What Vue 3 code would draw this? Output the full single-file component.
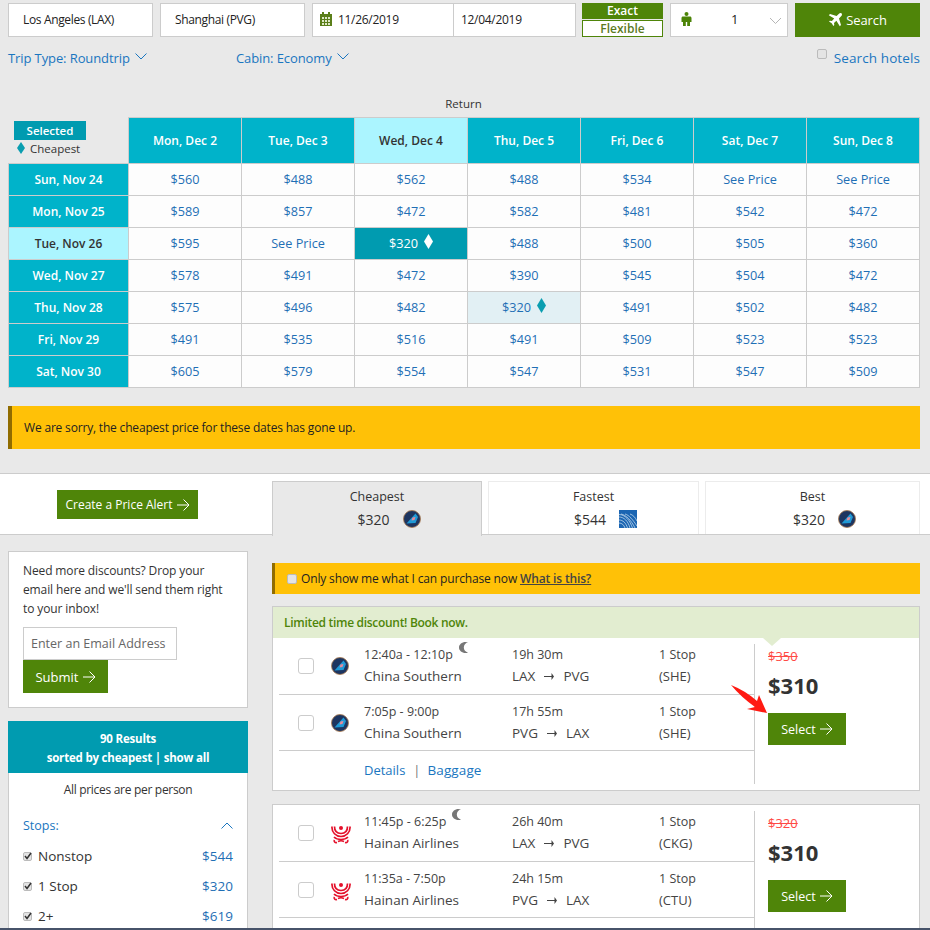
<script setup>
const heads = [
  { t: 'Mon, Dec 2' }, { t: 'Tue, Dec 3' }, { t: 'Wed, Dec 4', on: true }, { t: 'Thu, Dec 5' },
  { t: 'Fri, Dec 6' }, { t: 'Sat, Dec 7' }, { t: 'Sun, Dec 8' }
]
const rows = [
  { d: 'Sun, Nov 24', p: ['$560','$488','$562','$488','$534','See Price','See Price'] },
  { d: 'Mon, Nov 25', p: ['$589','$857','$472','$582','$481','$542','$472'] },
  { d: 'Tue, Nov 26', on: true, p: ['$595','See Price','$320','$488','$500','$505','$360'] },
  { d: 'Wed, Nov 27', p: ['$578','$491','$472','$390','$545','$504','$472'] },
  { d: 'Thu, Nov 28', p: ['$575','$496','$482','$320','$491','$502','$482'] },
  { d: 'Fri, Nov 29', p: ['$491','$535','$516','$491','$509','$523','$523'] },
  { d: 'Sat, Nov 30', p: ['$605','$579','$554','$547','$531','$547','$509'] }
]
const tabs = [
  { t: 'Cheapest', p: '$320', logo: 'cs', on: true },
  { t: 'Fastest', p: '$544', logo: 'ua' },
  { t: 'Best', p: '$320', logo: 'cs' }
]
const stops = [['Nonstop','$544'],['1 Stop','$320'],['2+','$619']]
const cards = [
  { discount: true, old: '$350', price: '$310', logo: 'cs', footer: true, legs: [
    { time: '12:40a - 12:10p', moon: true, air: 'China Southern', dur: '19h 30m', from: 'LAX', to: 'PVG', stop: '1 Stop', via: '(SHE)' },
    { time: '7:05p - 9:00p', air: 'China Southern', dur: '17h 55m', from: 'PVG', to: 'LAX', stop: '1 Stop', via: '(SHE)' }
  ]},
  { old: '$320', price: '$310', logo: 'hu', legs: [
    { time: '11:45p - 6:25p', moon: true, air: 'Hainan Airlines', dur: '26h 40m', from: 'LAX', to: 'PVG', stop: '1 Stop', via: '(CKG)' },
    { time: '11:35a - 7:50p', air: 'Hainan Airlines', dur: '24h 15m', from: 'PVG', to: 'LAX', stop: '1 Stop', via: '(CTU)' }
  ]}
]
</script>

<template>
  <div class="page">
    <div class="search">
      <div class="field f1">Los Angeles (LAX)</div>
      <div class="field f1">Shanghai (PVG)</div>
      <div class="dates">
        <div class="date d1">
          <svg width="14" height="14" viewBox="0 0 14 14" class="cal"><path fill="#5b7f1a" d="M1 2h2V0h2v2h4V0h2v2h2v12H1z"/><path fill="#dfe8c8" d="M3 5h2v2H3zM6 5h2v2H6zM9 5h2v2H9zM3 8h2v2H3zM6 8h2v2H6zM9 8h2v2H9zM3 11h2v2H3zM6 11h2v2H6zM9 11h2v2H9z"/></svg>
          <span>11/26/2019</span>
        </div>
        <div class="date d2">12/04/2019</div>
      </div>
      <div class="flex-toggle">
        <div class="exact">Exact</div>
        <div class="flexible">Flexible</div>
      </div>
      <div class="pax">
        <svg class="person" width="11" height="14" viewBox="0 0 11 14"><circle cx="5.5" cy="2" r="2" fill="#4c8408"/><path fill="#4c8408" d="M2 4.500h7c.9 0 1.500.6 1.500 1.500v4H9v4H6.200v-4H4.800v4H2v-4H.5V6c0-.9.6-1.500 1.500-1.500z"/></svg>
        <span class="pax-n">1</span>
        <svg class="chev-g" width="13" height="8" viewBox="0 0 13 8"><path d="M1 1l5.500 5.500L12 1" fill="none" stroke="#b5b5b5" stroke-width="1"/></svg>
      </div>
      <div class="search-btn">
        <svg width="14" height="14" viewBox="0 0 14 14"><path fill="#fff" d="M13.600.4c-.7-.7-2-.4-2.900.5L8.600 3 2 1 .8 2.200 6.200 5.600 3.900 8 1.900 7.700 1 8.600l2.700 1.700L5.400 13l.9-.9-.3-2 2.400-2.300 3.400 5.400 1.200-1.200-2-6.600 2.100-2.100c.9-.9 1.200-2.200.5-2.900z"/></svg>
        <span>Search</span>
      </div>
    </div>

    <div class="opts">
      <div class="opt trip">Trip Type: Roundtrip
        <svg width="12" height="7" viewBox="0 0 12 7"><path d="M.5.500L6 6 11.500.500" fill="none" stroke="#1a76c0"/></svg>
      </div>
      <div class="opt cabin">Cabin: Economy
        <svg width="12" height="7" viewBox="0 0 12 7"><path d="M.5.500L6 6 11.500.500" fill="none" stroke="#1a76c0"/></svg>
      </div>
      <div class="hotels"><span class="cb small"></span><span class="opt hotel-t">Search hotels</span></div>
    </div>

    <div class="return-label">Return</div>

    <div class="grid">
      <div class="legend">
        <div class="sel-tag">Selected</div>
        <div class="cheap-tag">
          <svg width="8" height="12" viewBox="0 0 8 12"><path fill="#0a9eb0" d="M4 0l4 6-4 6-4-6z"/></svg>
          <span>Cheapest</span>
        </div>
      </div>
      <div v-for="h in heads" :key="h.t" class="gh" :class="{ hon: h.on }">{{ h.t }}</div>
      <template v-for="(r, ri) in rows" :key="r.d">
        <div class="rh" :class="{ hon: r.on }">{{ r.d }}</div>
        <div v-for="(p, ci) in r.p" :key="ci" class="gc"
             :class="{ sel: ri === 2 && ci === 2, low: ri === 4 && ci === 3 }">
          <span>{{ p }}</span>
          <svg v-if="(ri === 2 && ci === 2) || (ri === 4 && ci === 3)" class="dia" width="9" height="15" viewBox="0 0 9 15">
            <path :fill="ri === 2 ? '#fff' : '#0a9eb0'" d="M4.500 0L9 7.500 4.500 15 0 7.500z"/>
          </svg>
        </div>
      </template>
    </div>

    <div class="alert">We are sorry, the cheapest price for these dates has gone up.</div>

    <div class="band">
      <div class="band-left">
        <div class="btn alert-btn">Create a Price Alert
          <svg width="13" height="12" viewBox="0 0 13 12"><path d="M0 6h12M6.500.500L12 6l-5.500 5.500" fill="none" stroke="#fff"/></svg>
        </div>
      </div>
      <div class="tabs">
        <div v-for="t in tabs" :key="t.t" class="tab" :class="{ active: t.on }">
          <div class="tab-t">{{ t.t }}</div>
          <div class="tab-p">
            <span>{{ t.p }}</span>
            <svg v-if="t.logo === 'cs'" width="18" height="18" viewBox="0 0 18 18">
              <circle cx="9" cy="9" r="8.500" fill="#1d3560" stroke="#a9794d" stroke-width=".8"/>
              <path fill="#1f9ad6" d="M12.500 3.500L15 7l-2.500 6-9 .5z"/>
              <path fill="#e88a9a" d="M9.500 7.500l3-.5-1 3-3 .5z"/>
            </svg>
            <svg v-else width="18" height="18" viewBox="0 0 18 18">
              <rect width="18" height="18" fill="#1b65b2"/>
              <g fill="none" stroke="#d6e6f4" stroke-width=".7">
                <path d="M0 7c5 0 9 4 11 11M0 10c4 0 7 3 8.500 8M0 13c3 0 5 2 6 5M0 4.500c6 0 11 6 13.500 13.500M2 4c5 1 10 6 14 14M6 4c4 1 8 6 12 12M11 4c3 1 5 3 7 7"/>
              </g>
            </svg>
          </div>
        </div>
      </div>
    </div>

    <div class="main">
      <aside class="side">
        <div class="promo">
          <p>Need more discounts? Drop your email here and we'll send them right to your inbox!</p>
          <div class="email">Enter an Email Address</div>
          <div class="btn submit">Submit
            <svg width="13" height="12" viewBox="0 0 13 12"><path d="M0 6h12M6.500.500L12 6l-5.500 5.500" fill="none" stroke="#fff"/></svg>
          </div>
        </div>
        <div class="res-head">
          <div>90 Results</div>
          <div>sorted by cheapest | show all</div>
        </div>
        <div class="filters">
          <div class="per">All prices are per person</div>
          <div class="stops-h">
            <span>Stops:</span>
            <svg width="12" height="7" viewBox="0 0 12 7"><path d="M.5 6.500L6 1l5.500 5.500" fill="none" stroke="#1a76c0"/></svg>
          </div>
          <div v-for="s in stops" :key="s[0]" class="stop-row">
            <span class="cb checked">
              <svg width="8" height="8" viewBox="0 0 8 8"><path d="M1 4l2 2.500L7 1" fill="none" stroke="#333" stroke-width="1.500"/></svg>
            </span>
            <span class="stop-name">{{ s[0] }}</span>
            <span class="stop-price">{{ s[1] }}</span>
          </div>
        </div>
      </aside>

      <section class="results">
        <div class="purchase">
          <span class="cb small"></span>
          <span>Only show me what I can purchase now <u>What is this?</u></span>
        </div>

        <article v-for="(c, ci) in cards" :key="ci" class="card">
          <div v-if="c.discount" class="disc">Limited time discount! Book now.</div>
          <div class="card-body">
            <div class="legs">
              <div v-for="(l, li) in c.legs" :key="li" class="leg">
                <span class="box"></span>
                <span class="logo">
                  <svg v-if="c.logo === 'cs'" width="18" height="18" viewBox="0 0 18 18">
                    <circle cx="9" cy="9" r="8.500" fill="#1d3560" stroke="#a9794d" stroke-width=".8"/>
                    <path fill="#1f9ad6" d="M12.500 3.500L15 7l-2.500 6-9 .5z"/>
                    <path fill="#e88a9a" d="M9.500 7.500l3-.5-1 3-3 .5z"/>
                  </svg>
                  <svg v-else width="20" height="20" viewBox="0 0 20 20">
                    <g fill="none" stroke="#e4102a" stroke-width="1.700">
                      <path d="M1 2.500c-.5 6 4 10 9 10s9.500-4 9-10"/>
                      <path d="M3.500 2.500C3.500 7 6 9.500 10 9.500s6.500-2.500 6.500-7"/>
                      <path d="M3 13c1.500 1.500 4 2.500 7 2.500s5.500-1 7-2.500"/>
                      <path d="M6 18.500c-2 .5-3.500-1-2.500-2.500M14 18.500c2 .5 3.500-1 2.500-2.500M7 17.500c2-1 4-1 6 0"/>
                    </g>
                    <circle cx="10" cy="4" r="2" fill="#e4102a"/>
                  </svg>
                </span>
                <div class="c-time">
                  <div class="l1">{{ l.time }}
                    <svg v-if="l.moon" class="moon" width="9" height="11" viewBox="0 0 9 11"><path fill="#777" d="M6.500 0C3 0 0 2.400 0 5.500S3 11 6.500 11c1 0 1.800-.2 2.500-.6C6.500 10 4.800 8 4.800 5.500S6.500 1 9 .6C8.300.2 7.500 0 6.500 0z"/></svg>
                  </div>
                  <div class="l2">{{ l.air }}</div>
                </div>
                <div class="c-dur">
                  <div class="l1">{{ l.dur }}</div>
                  <div class="l2">{{ l.from }}<svg class="arr" width="10" height="7" viewBox="0 0 10 7"><path fill="#444" d="M0 3h7.500V0L10 3.500 7.500 7V4H0z"/></svg>{{ l.to }}</div>
                </div>
                <div class="c-stop">
                  <div class="l1">{{ l.stop }}</div>
                  <div class="l2">{{ l.via }}</div>
                </div>
              </div>
              <div v-if="c.footer" class="links"><a>Details</a><i>|</i><a class="bag">Baggage</a></div>
            </div>
            <div class="buy">
              <span v-if="c.discount" class="notch"></span>
              <div class="old">{{ c.old }}</div>
              <div class="price">{{ c.price }}</div>
              <div class="btn select">Select
                <svg width="13" height="12" viewBox="0 0 13 12"><path d="M0 6h12M6.500.500L12 6l-5.500 5.500" fill="none" stroke="#fff"/></svg>
              </div>
            </div>
          </div>
        </article>
      </section>
    </div>

    <svg class="red-arrow" width="40" height="36" viewBox="0 0 40 36"><path fill="#ff1a12" d="M1 1Q16 7 27 17L29 11 37 29 17 25 25 23Q11 13 1 1z"/></svg>
    <div class="edge"></div>
  </div>
</template>

<style>
html, body { margin: 0; background: #e9e9e9; overflow: hidden; }
</style>

<style scoped>
.page {
  position: relative; width: 930px; height: 930px; overflow: hidden; background: #e9e9e9;
  font-family: "Open Sans", "Noto Sans", sans-serif; font-size: 13px; color: #333; box-sizing: border-box;
}
.page * { box-sizing: border-box; }

.search { display: flex; height: 37px; padding: 3px 10px 0 8px; }
.field {
  width: 145px; height: 34px; margin-right: 7px; background: #fff; border: 1px solid #ccc;
  padding-left: 14px; line-height: 32px; font-size: 12px; letter-spacing: -.35px; color: #222;
}
.dates { display: flex; width: 264px; height: 34px; margin-right: 6px; background: #fff; border: 1px solid #ccc; font-size: 12px; letter-spacing: -.3px; color: #222; }
.date { line-height: 32px; }
.d1 { width: 141px; border-right: 1px solid #ccc; display: flex; align-items: center; padding-left: 6px; }
.cal { margin-right: 5px; margin-top: -2px; }
.d2 { padding-left: 7px; }
.flex-toggle { width: 81px; margin-right: 7px; display: flex; flex-direction: column; text-align: center; font-size: 12px; font-weight: 600; }
.exact { height: 16px; line-height: 16px; background: #4f8509; color: #fff; }
.flexible { height: 17px; margin-top: 1px; line-height: 15px; background: #fff; border: 1px solid #4f8509; color: #5c7a1e; }
.pax { width: 118px; height: 34px; margin-right: 7px; background: #fff; border: 1px solid #ccc; display: flex; align-items: center; padding-left: 10px; position: relative; }
.person { margin-top: -2px; }
.pax-n { margin-left: 39px; font-size: 13px; color: #222; margin-top: -2px; }
.chev-g { position: absolute; left: 98px; top: 13px; }
.search-btn { width: 125px; height: 34px; background: #4f8509; color: #fff; display: flex; align-items: center; justify-content: center; gap: 4px; font-size: 13px; letter-spacing: -.1px; }

.opts { position: relative; display: flex; height: 30px; padding: 12px 10px 0 8px; }
.opt { color: #1a76c0; font-size: 13px; letter-spacing: -.1px; line-height: 18px; }
.opt svg { margin-left: 2px; vertical-align: 3px; }
.trip { width: 228px; }
.hotels { margin-left: auto; display: flex; align-items: flex-start; gap: 7px; }
.hotel-t { font-size: 13.5px; letter-spacing: .1px; }
.cb { display: inline-block; width: 10px; height: 10px; background: #e4e4e4; border: 1px solid #bbb; border-radius: 2px; flex: none; }

.return-label { height: 21px; margin-top: 29px; text-align: center; font-size: 11.5px; line-height: 16px; color: #333; width: 927px; }

.grid {
  display: grid; grid-template-columns: 121px repeat(7, 113px); grid-template-rows: 47px repeat(7, 32px);
  width: 912px; margin-left: 8px;
}
.legend { padding: 4px 0 0 6px; border-right: 1px solid #ccc; border-bottom: 1px solid #ccc; }
.sel-tag { width: 72px; height: 19px; background: #009bb0; color: #fff; text-align: center; font-size: 11.5px; font-weight: 600; line-height: 20px; }
.cheap-tag { display: flex; align-items: center; gap: 5px; padding-left: 3px; height: 16px; margin-top: 0; font-size: 11.5px; color: #333; }
.gh, .rh { background: #00b3ca; color: #fff; font-size: 12px; font-weight: 600; display: flex; align-items: center; justify-content: center; border: 1px solid #ccc; border-width: 1px 1px 1px 0; }
.rh { border-width: 0 1px 1px 1px; }
.hon { background: #abf5ff; color: #333; }
.gc { background: #fdfdfd; color: #1f6fb5; display: flex; align-items: center; justify-content: center; gap: 6px; padding-bottom: 2px; border-right: 1px solid #ccc; border-bottom: 1px solid #ccc; font-size: 12.7px; }
.sel { background: #009bb0; color: #fff; }
.low { background: #e2f0f4; }
.dia { margin-top: -3px; }

.alert {
  margin: 18px 10px 0 8px; height: 43px; background: #ffc107; border-left: 4px solid #906c00;
  padding-left: 12px; line-height: 43px; font-size: 12px; letter-spacing: -.18px; color: #222;
}

.band { display: flex; height: 62px; margin-top: 24px; background: #fff; border-top: 1px solid #ccc; border-bottom: 1px solid #ccc; }
.band-left { width: 272px; padding: 16px 0 0 57px; }
.btn { background: #4f8509; color: #fff; font-size: 12px; display: flex; align-items: center; justify-content: center; gap: 4px; }
.alert-btn { width: 141px; height: 29px; }
.tabs { display: flex; gap: 6px; padding-top: 7px; height: 61px; }
.tab { background: #fff; border: 1px solid #ececec; border-bottom: 0; text-align: center; height: 53px; width: 211px; }
.tab:nth-child(1) { width: 210px; }
.tab:nth-child(3) { width: 215px; }
.tab.active { background: #e9e9e9; border: 1px solid #ccc; border-bottom: 0; height: 55px; }
.tab-t { font-size: 12.5px; line-height: 16px; margin-top: 7px; }
.tab-p { display: flex; align-items: center; justify-content: center; gap: 13px; padding-left: 24px; font-size: 14px; height: 24px; margin-top: 2px; }

.main { display: flex; padding: 16px 0 0 8px; }
.side { width: 240px; margin-right: 24px; }
.promo { height: 157px; background: #fff; border: 1px solid #ccc; padding: 9px 14px 0; }
.promo p { margin: 0; font-size: 12px; letter-spacing: -.12px; line-height: 19px; color: #333; }
.email { width: 154px; height: 33px; border: 1px solid #ccc; margin-top: 9px; padding-left: 7px; line-height: 31px; font-size: 12.5px; color: #666; background: #fff; }
.submit { width: 85px; height: 33px; font-size: 13px; }
.res-head { margin-top: 13px; height: 52px; background: #009bb0; color: #fff; text-align: center; font-size: 11.5px; letter-spacing: -.2px; font-weight: 700; padding-top: 8px; line-height: 19px; }
.filters { background: #fff; border: 1px solid #ccc; border-top: 0; height: 300px; padding: 9px 14px 0; }
.per { text-align: center; font-size: 12px; letter-spacing: -.3px; line-height: 16px; }
.stops-h { display: flex; justify-content: space-between; align-items: center; color: #1a76c0; font-size: 12.5px; margin-top: 18px; height: 18px; }
.stop-row { display: flex; align-items: center; height: 30px; font-size: 13.5px; }
.stops-h + .stop-row { margin-top: 7px; }
.stop-name { margin-left: 6px; }
.stop-price { margin-left: auto; color: #1f6fb5; font-size: 13.5px; }
.cb.checked { display: flex; align-items: center; justify-content: center; width: 9px; height: 9px; }
.cb.checked svg { flex: none; }

.results { width: 648px; }
.purchase { margin-top: 12px; height: 31px; background: #ffc107; border-left: 3px solid #906c00; display: flex; align-items: center; gap: 4px; padding-left: 12px; font-size: 12px; letter-spacing: -.15px; color: #222; }
.purchase u { font-weight: 600; color: #444; }
.card { background: #fff; border: 1px solid #ccc; margin-top: 12px; height: 185px; }
.card + .card { height: 200px; margin-top: 13px; }
.disc { height: 31px; background: #e2edd0; color: #4f8509; font-size: 12px; letter-spacing: -.3px; font-weight: 600; padding-left: 11px; line-height: 31px; }
.card-body { display: flex; }
.legs { width: 475px; margin-left: 6px; }
.leg { height: 57px; border-bottom: 1px solid #ccc; display: flex; align-items: flex-start; position: relative; font-size: 13px; color: #444; }
.leg + .leg { height: 56px; }
.box { position: absolute; left: 19px; top: 20px; width: 16px; height: 16px; border: 1px solid #ccc; border-radius: 3px; background: #fff; }
.logo { position: absolute; left: 52px; top: 19px; display: block; line-height: 0; }
.c-time { position: absolute; left: 85px; top: 6px; white-space: nowrap; }
.c-dur { position: absolute; left: 233px; top: 6px; white-space: nowrap; }
.c-stop { position: absolute; left: 380px; top: 6px; white-space: nowrap; }
.l1 { height: 21px; line-height: 21px; font-size: 12.5px; position: relative; }
.l2 { height: 22px; line-height: 22px; font-size: 13.5px; }
.c-stop .l1 { font-size: 12.5px; }
.c-stop .l2 { font-size: 13px; }
.c-dur .l2 { font-size: 13.5px; }
.arr { margin: 0 9px; vertical-align: 1px; }
.moon { position: absolute; top: -2px; margin-left: 6px; }
.links { padding: 9px 0 0 85px; color: #1a76c0; font-size: 13px; line-height: 20px; }
.links i { font-style: normal; color: #777; margin: 0 7px 0 8px; }
.bag { font-size: 13.5px; letter-spacing: .1px; }
.buy { flex: 1; position: relative; border-left: 1px solid #ccc; margin-top: 6px; height: 140px; padding: 0 0 0 13px; }
.notch { position: absolute; left: 8px; top: -6px; width: 0; height: 0; border: 9px solid transparent; border-top: 8px solid #e2edd0; border-bottom: 0; }
.old { color: #ff4a45; text-decoration: line-through; font-size: 13px; line-height: 24px; }
.price { font-size: 22px; font-weight: 700; color: #333; line-height: 36px; margin-top: -1px; }
.select { width: 78px; height: 32px; margin-top: 10px; font-size: 12.5px; }

.red-arrow { position: absolute; left: 730px; top: 684px; }
.edge { position: absolute; left: 0; right: 0; top: 928px; height: 2px; background: #47536a; }
</style>
